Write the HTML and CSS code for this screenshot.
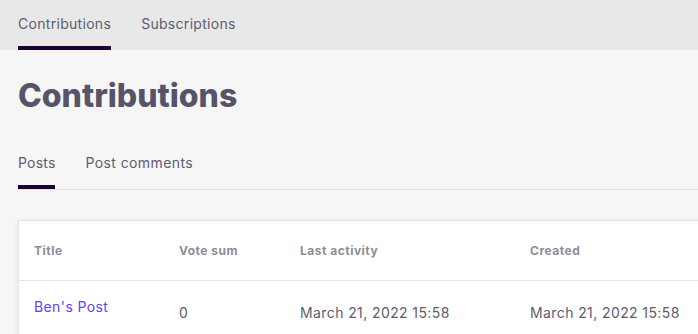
FILE: index.html
```html
<!DOCTYPE html>
<html>
<head>
<meta charset="utf-8">
<link rel="stylesheet" href="styles.css">
</head>
<body>
<nav class="topnav">
  <a class="toptab active">Contributions</a>
  <a class="toptab">Subscriptions</a>
</nav>
<main class="page">
  <h1 class="title">Contributions</h1>
  <div class="subtabs">
    <a class="subtab active">Posts</a>
    <a class="subtab">Post comments</a>
  </div>
  <div class="card">
    <div class="row head">
      <div class="cell">Title</div>
      <div class="cell">Vote sum</div>
      <div class="cell">Last activity</div>
      <div class="cell">Created</div>
    </div>
    <div class="row body">
      <div class="cell link">Ben's Post</div>
      <div class="cell">0</div>
      <div class="cell">March 21, 2022 15:58</div>
      <div class="cell">March 21, 2022 15:58</div>
    </div>
  </div>
</main>
</body>
</html>
```

FILE: styles.css
```css
html, body {
  margin: 0;
  padding: 0;
  background: #f6f6f6;
  font-family: Inter, "Open Sans", "Liberation Sans", sans-serif;
  overflow: hidden;
}
.topnav {
  display: flex;
  gap: 30px;
  height: 50px;
  padding-left: 18px;
  background: #e8e8e8;
}
.toptab {
  display: flex;
  align-items: center;
  box-sizing: border-box;
  height: 50px;
  border-bottom: 4px solid transparent;
  font-size: 14px;
  letter-spacing: 0.3px;
  color: #5f5b6e;
}
.toptab.active {
  border-bottom-color: #1b0033;
}
.page {
  padding-left: 18px;
}
.title {
  margin: 0;
  padding-top: 27px;
  height: 63px;
  line-height: 38px;
  font-size: 32px;
  font-weight: 800;
  color: #57546a;
}
.subtabs {
  display: flex;
  gap: 30px;
  margin-top: 7px;
  height: 42px;
  border-bottom: 1px solid #e0e0e0;
}
.subtab {
  display: flex;
  align-items: center;
  box-sizing: border-box;
  height: 42px;
  padding-bottom: 8px;
  border-bottom: 4px solid transparent;
  font-size: 14px;
  letter-spacing: 0.4px;
  color: #5f5b6e;
}
.subtab.active {
  letter-spacing: 0.2px;
  border-bottom-color: #1b0033;
}
.card {
  margin-top: 30px;
  width: 760px;
  background: #ffffff;
  border: 1px solid #e4e4e4;
  box-shadow: 0 1px 6px rgba(0, 0, 0, 0.08);
}
.row {
  display: grid;
  grid-template-columns: 145px 121px 230px 1fr;
  padding-left: 15px;
}
.row.head {
  height: 59px;
  align-items: center;
  border-bottom: 1px solid #e4e4e4;
  font-size: 12px;
  font-weight: 700;
  letter-spacing: 0.5px;
  color: #8e8b9b;
}
.row.body {
  height: 60px;
  align-items: start;
  font-size: 14px;
  letter-spacing: 0.4px;
  color: #5f5b6e;
}
.row.body .cell {
  padding-top: 22px;
  line-height: 20px;
}
.row.body .cell.link {
  padding-top: 16px;
  color: #6142f5;
}
```
